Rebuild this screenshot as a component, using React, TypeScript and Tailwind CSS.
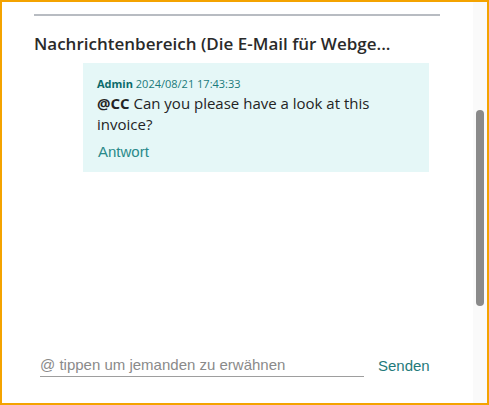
import React from 'react'

function App() {
  return (
    <div className="w-[489px] h-[405px] border-2 border-[#f4a300] bg-white flex overflow-hidden font-['Open_Sans',sans-serif]">
      <div className="flex-1 flex flex-col pl-[32px] pr-[33px]">
        <div className="mt-[12px] h-[2px] bg-[#b8bcc2]"></div>
        <div className="mt-[17px] text-[17px] font-semibold text-[#2a2a2a] leading-[22px] whitespace-nowrap">
          Nachrichtenbereich (Die E-Mail für Webge...
        </div>
        <div className="mt-[8px] ml-[49px] w-[346px] bg-[#e5f7f7] px-[14px] pt-[13px] pb-[10px]">
          <div className="text-[11px] leading-[16px] text-[#1a7a7a]">
            <span className="font-bold text-[#0b6a6a]">Admin</span> 2024/08/21 17:43:33
          </div>
          <div className="mt-[1px] text-[15px] leading-[21px] text-[#242424]">
            <span className="font-bold">@CC</span> Can you please have a look at this invoice?
          </div>
          <div className="mt-[7px] ml-[1px] text-[15px] leading-[20px] text-[#2a8a8a] font-['Liberation_Sans',sans-serif]">
            Antwort
          </div>
        </div>
        <div className="flex-1"></div>
        <div className="flex items-end mb-[26px] ml-[6px]">
          <div className="w-[324px] border-b border-[#9e9e9e] pb-[2px] text-[15px] leading-[18px] text-[#8a8a8a] font-['Liberation_Sans',sans-serif]">
            @ tippen um jemanden zu erwähnen
          </div>
          <div className="ml-[14px] pb-[2px] text-[15px] leading-[18px] text-[#1f7a7a] font-['Liberation_Sans',sans-serif]">
            Senden
          </div>
        </div>
      </div>
      <div className="w-[14px] bg-[#fafafa] flex justify-center">
        <div className="mt-[108px] w-[8px] h-[196px] rounded-full bg-[#8a8a8a]"></div>
      </div>
    </div>
  )
}

export default App
